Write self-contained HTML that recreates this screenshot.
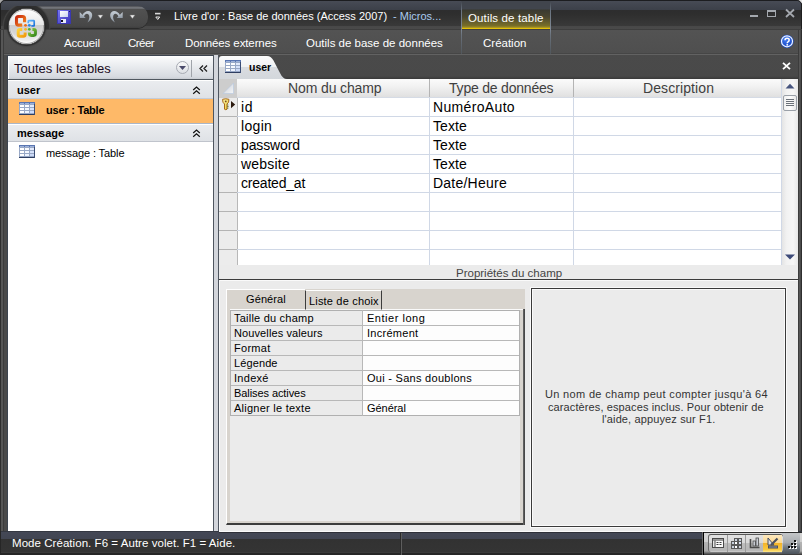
<!DOCTYPE html>
<html><head><meta charset="utf-8">
<style>
*{margin:0;padding:0;box-sizing:border-box}
html,body{width:802px;height:555px;overflow:hidden;background:#3b3b3b}
body{position:relative;font-family:"Liberation Sans",sans-serif;font-size:12px;color:#000}
.a{position:absolute}
.t{position:absolute;white-space:nowrap;line-height:1}
svg{position:absolute;overflow:visible}
</style></head><body>
<!-- ============ TITLE BAR ============ -->
<div class="a" style="left:0;top:0;width:802px;height:30px;background:linear-gradient(#1c1d20 0,#1c1d20 1px,#474b55 1px,#3c4049 10px,#2d2d2e 10px,#2e2e2e 14px,#383838 25px,#3a3a3a 26.5px,#484848 26.5px,#4a4a4a 29px)"></div>
<svg style="left:0;top:0" width="6" height="6"><path d="M0 0 H5 Q1.5 0.8 0 4.5 Z" fill="#a8a8a8"/><path d="M5 0 Q1.5 0.8 0 4.5" fill="none" stroke="#1c1d20" stroke-width="1"/></svg>
<svg style="left:796px;top:0" width="6" height="6"><path d="M6 0 H1 Q4.5 0.8 6 4.5 Z" fill="#e4e4e4"/><path d="M1 0 Q4.5 0.8 6 4.5" fill="none" stroke="#1c1d20" stroke-width="1"/></svg>
<div class="a" style="left:801px;top:4px;width:1px;height:26px;background:#1e1e1e"></div>
<div class="a" style="left:0;top:4px;width:1px;height:26px;background:#1e1e1e"></div>
<!-- QAT bar -->
<div class="a" style="left:30px;top:6px;width:118px;height:22px;border-radius:10px;background:linear-gradient(#3a3b3e 0,#76787e 1px,#6a6c70 2.5px,#515151 3px,#4c4c4c 12px,#474747 20px,#3e3e3e 22px);box-shadow:0 1px 0 #2a2a2a"></div>
<!-- office button -->
<div class="a" style="z-index:4;left:0;top:6px;width:60px;height:23px;overflow:hidden"><div class="a" style="left:2px;top:-4px;width:49px;height:49px;border-radius:50%;background:radial-gradient(circle closest-side,#303030 0,#303030 90%,rgba(70,70,70,0.8) 95%,rgba(70,70,70,0) 100%)"></div></div>
<div class="a" style="z-index:5;left:8px;top:8px;width:37px;height:37px;border-radius:50%;background:#505050;box-shadow:0 0 1.5px 1px #262626"></div>
<div class="a" style="z-index:5;left:9px;top:9px;width:35px;height:35px;border-radius:50%;background:linear-gradient(#ffffff 0,#eeeeee 45%,#cdcdcd 46%,#d8d8d8 70%,#f4f4f4 95%);box-shadow:inset 0 0 0 1px #a8a8a8, inset 0 -2px 2px #fff"></div>
<div class="a" style="z-index:5;left:9px;top:9px;width:35px;height:16px;border-radius:17.5px 17.5px 0 0/16px 16px 0 0;background:linear-gradient(#ffffff,#f0f0f0 60%,#e6e6e6);box-shadow:inset 0 1px 0 #bdbdbd"></div>
<svg style="z-index:5;left:0;top:0" width="60" height="50">
 <defs>
  <linearGradient id="lr" x1="0" y1="0" x2="1" y2="1"><stop offset="0" stop-color="#c82a10"/><stop offset="1" stop-color="#f58a1e"/></linearGradient>
  <linearGradient id="ly" x1="0" y1="0" x2="1" y2="1"><stop offset="0" stop-color="#ffd23a"/><stop offset="1" stop-color="#f29a0a"/></linearGradient>
  <linearGradient id="lg" x1="0" y1="0" x2="1" y2="1"><stop offset="0" stop-color="#8ccc40"/><stop offset="1" stop-color="#3a8a20"/></linearGradient>
  <linearGradient id="lb" x1="0" y1="0" x2="1" y2="1"><stop offset="0" stop-color="#60b8ff"/><stop offset="1" stop-color="#1a70d8"/></linearGradient>
 </defs>
 <path d="M24.6 22.2 V18.6 Q24.6 16.5 22.5 16.5 H18.6 Q16.5 16.5 16.5 18.6 V23 Q16.5 25.1 18.6 25.1 H22.2" fill="none" stroke="url(#lr)" stroke-width="3.1"/>
 <path d="M28.3 23.2 V21.2 Q28.3 20.6 29 20.6 H33.6 Q34.2 20.6 34.2 21.2 V25.2 Q34.2 25.9 33.6 25.9 H31.3" fill="none" stroke="url(#lb)" stroke-width="1.7"/>
 <path d="M22.2 29.4 H20 Q18.2 29.4 18.2 31.2 V34.5 Q18.2 36.3 20 36.3 H23.3 Q25.1 36.3 25.1 34.5 V32.4" fill="none" stroke="url(#ly)" stroke-width="3"/>
 <path d="M32.4 29.4 H33.6 Q35.4 29.4 35.4 31.2 V33.6 Q35.4 35.4 33.6 35.4 H31.2 Q29.4 35.4 29.4 33.6 V32.4" fill="none" stroke="url(#lg)" stroke-width="3"/>
 <circle cx="25.5" cy="25.3" r="1.4" fill="#ee6a18"/>
 <circle cx="29.3" cy="25.3" r="1.4" fill="#2a88e8"/>
 <circle cx="25.5" cy="29.3" r="1.4" fill="#f8b820"/>
 <circle cx="29.3" cy="29.3" r="1.4" fill="#58b030"/>
</svg>
<!-- save icon -->
<svg style="left:57px;top:10px" width="14" height="14" shape-rendering="crispEdges">
 <defs><linearGradient id="sg" x1="0" y1="0" x2="1" y2="1"><stop offset="0" stop-color="#7a78f0"/><stop offset="1" stop-color="#3a36b8"/></linearGradient>
 <linearGradient id="sl" x1="0" y1="0" x2="1" y2="1"><stop offset="0" stop-color="#ffffff"/><stop offset="1" stop-color="#c8d4f0"/></linearGradient></defs>
 <rect x="0" y="0" width="14" height="14" fill="#3a38b0"/>
 <rect x="1" y="0" width="12" height="13" fill="url(#sg)"/>
 <rect x="3" y="1" width="8" height="6" fill="url(#sl)"/>
 <rect x="12" y="1" width="1" height="1" fill="#1a1a60"/>
 <rect x="4" y="9" width="5" height="4" fill="#e8ecf8"/>
 <rect x="4" y="10" width="2" height="2" fill="#101020"/>
</svg>
<!-- undo -->
<svg style="left:76px;top:6px" width="20" height="20">
 <defs><linearGradient id="ug" x1="0" y1="0" x2="0" y2="1"><stop offset="0" stop-color="#c4ccd4"/><stop offset="1" stop-color="#8e98a4"/></linearGradient></defs>
 <path d="M3.7 6 V12 H9.7 Z" fill="url(#ug)"/>
 <path d="M6.2 9.6 C 8 5.5 12.5 3.8 15 6.2 C 17.5 9 16 13.5 11.5 16.5 C 13.5 13 14 10 12.3 8.3 C 10.8 7 8.8 8.2 7.8 10.8 Z" fill="url(#ug)"/>
</svg>
<svg style="left:97px;top:14px" width="7" height="6"><path d="M0.8 1 h5.2 l-2.6 3.6z" fill="#f0f0f0" stroke="#777" stroke-width="0.5"/></svg>
<!-- redo -->
<svg style="left:107px;top:6px" width="20" height="20">
 <path d="M15.7 6 V12 H9.7 Z" fill="url(#ug)"/>
 <path d="M13.2 9.6 C 11.4 5.5 6.9 3.8 4.4 6.2 C 1.9 9 3.4 13.5 7.9 16.5 C 5.9 13 5.4 10 7.1 8.3 C 8.6 7 10.6 8.2 11.6 10.8 Z" fill="url(#ug)"/>
</svg>
<svg style="left:129px;top:14px" width="7" height="6"><path d="M0.8 1 h5.2 l-2.6 3.6z" fill="#f0f0f0" stroke="#777" stroke-width="0.5"/></svg>
<!-- customize -->
<svg style="left:155px;top:12px" width="7" height="9"><path d="M0 1.6 h5.5" stroke="#d8d8d8" stroke-width="1.6"/><path d="M0.8 5 H4.7 L2.75 7.5 Z" stroke="#e8e8e8" stroke-width="1" fill="none" stroke-linejoin="round"/></svg>
<!-- title text -->
<div class="t" style="left:174px;top:11px;font-size:11px;color:#fff">Livre d'or : Base de données (Access 2007)</div>
<div class="t" style="left:393px;top:11px;font-size:11px;color:#a9cbef">- Micros...</div>
<!-- contextual tab header -->
<div class="a" style="left:461px;top:1px;width:90px;height:28px;background:linear-gradient(#41454d 0,#41454d 8px,#3a3a30 9px,#4a4630 16px,#7a7028 25px,#a89420 26.5px,#e8c000 27px,#e0c010 28px)"></div>
<div class="t" style="left:468px;top:13px;font-size:11.5px;letter-spacing:0.14px;color:#fff">Outils de table</div>
<!-- window buttons -->
<div class="a" style="left:750px;top:15px;width:8px;height:2px;background:#a4a8ae"></div>
<div class="a" style="left:767px;top:10px;width:9px;height:7px;border:1px solid #a4a8ae;border-top-width:2px"></div>
<svg style="left:785px;top:9px" width="10" height="9"><path d="M1 0.5 L 9 8 M9 0.5 L 1 8" stroke="#a4a8ae" stroke-width="1.8"/></svg>

<!-- ============ TAB ROW ============ -->
<div class="a" style="left:0;top:29px;width:802px;height:26px;background:linear-gradient(#3e3e3e 0,#3e3e3e 1px,#535353 1px,#4f4f4f 24px,#464646 24px,#464646 25px,#626262 25px)"></div>
<div class="a" style="left:461px;top:1px;width:1px;height:53px;background:linear-gradient(#41454d,#6a7480 10px,#7e8894 28px,#6a727c 34px,#50565c 53px)"></div>
<div class="a" style="left:550px;top:1px;width:1px;height:53px;background:linear-gradient(#41454d,#6a7480 10px,#7e8894 28px,#6a727c 34px,#50565c 53px)"></div>
<div class="t" style="left:64px;top:38px;font-size:11.5px;letter-spacing:-0.19px;color:#fff">Accueil</div>
<div class="t" style="left:128px;top:38px;font-size:11.5px;letter-spacing:-0.55px;color:#fff">Créer</div>
<div class="t" style="left:185px;top:38px;font-size:11.5px;letter-spacing:-0.11px;color:#fff">Données externes</div>
<div class="t" style="left:306px;top:38px;font-size:11.5px;color:#fff">Outils de base de données</div>
<div class="t" style="left:483px;top:38px;font-size:11.5px;color:#fff">Création</div>
<!-- help -->
<svg style="left:779px;top:33px" width="16" height="16">
 <defs><radialGradient id="hg" cx="0.4" cy="0.3" r="0.8"><stop offset="0" stop-color="#4a80f0"/><stop offset="1" stop-color="#0a3cc0"/></radialGradient></defs>
 <circle cx="8" cy="8.3" r="6.6" fill="#1a50d0"/>
 <circle cx="8" cy="8.3" r="5.5" fill="url(#hg)" stroke="#f4f8ff" stroke-width="1.2"/>
 <path d="M6 7.2 Q6 5.3 8.1 5.3 Q10.2 5.3 10.2 7 Q10.2 8.1 9 8.8 Q8.2 9.3 8.2 10.3" fill="none" stroke="#fff" stroke-width="1.5"/>
 <rect x="7.4" y="11.1" width="1.7" height="1.5" fill="#fff"/>
</svg>

<!-- window frame -->
<div class="a" style="left:0;top:30px;width:4px;height:502px;background:linear-gradient(90deg,#2e2e2e 0,#2e2e2e 1px,#565656 1px,#565656 3px,#3c3c3c 3px)"></div>
<div class="a" style="left:798px;top:30px;width:4px;height:502px;background:linear-gradient(90deg,#3c3c3c 0,#3c3c3c 1px,#5a5a5a 1px,#464646 3px,#2e2e2e 3px)"></div>
<!-- main bg -->
<div class="a" style="left:4px;top:55px;width:794px;height:477px;background:#4a4a4a"></div>

<!-- ============ NAV PANE ============ -->
<div class="a" style="left:7px;top:55px;width:207px;height:477px;background:#fff;border-left:1px solid #3d4550;border-top:1px solid #3d4550;border-right:1px solid #4f5660"></div>
<div class="a" style="left:8px;top:56px;width:205px;height:24px;background:linear-gradient(#ffffff 0,#f8f9fa 2px,#d6dae0 21px,#c8ccd2 23px);border-bottom:1px solid #505860;box-shadow:inset 1px 0 0 #fff"></div>
<div class="t" style="left:14px;top:62px;font-size:13px;color:#1a0a20">Toutes les tables</div>
<div class="a" style="left:176px;top:61px;width:13px;height:13px;border-radius:50%;border:1px solid #a7abb3;background:linear-gradient(#fafafa,#dcdfe4)"></div>
<svg style="left:179px;top:66px" width="8" height="5"><path d="M0 0 h7 l-3.5 4z" fill="#4a4a6a"/></svg>
<div class="a" style="left:191px;top:60px;width:1px;height:17px;background:#a0a4aa"></div>
<svg style="left:199px;top:65px" width="9" height="8"><path d="M4 0.5 L 1 3.5 L 4 6.5 M8 0.5 L 5 3.5 L 8 6.5" stroke="#222" stroke-width="1.3" fill="none"/></svg>

<div class="a" style="left:8px;top:80px;width:205px;height:19px;background:linear-gradient(#ffffff 0,#ffffff 1px,#eaecef 1px,#dfe2e6);border-bottom:1px solid #c4ccd8"></div>
<div class="t" style="left:17px;top:85px;font-size:11px;font-weight:bold;color:#000">user</div>
<svg style="left:192px;top:86px" width="9" height="9"><path d="M1.2 4 L4.5 1 L7.8 4 M1.2 7.8 L4.5 4.8 L7.8 7.8" stroke="#111" stroke-width="1.2" fill="none"/></svg>
<div class="a" style="left:8px;top:99px;width:205px;height:24px;background:#feb968"></div>
<div class="t" style="left:46px;top:105px;font-size:11px;letter-spacing:-0.22px;font-weight:bold;color:#000">user : Table</div>
<div class="a" style="left:8px;top:123px;width:205px;height:19px;background:linear-gradient(#aab6c8 0,#aab6c8 1px,#ffffff 1px,#ffffff 2px,#eaecef 2px,#dfe2e6);border-bottom:1px solid #c0c4cc"></div>
<div class="t" style="left:17px;top:128px;font-size:11px;font-weight:bold;color:#000">message</div>
<svg style="left:192px;top:129px" width="9" height="9"><path d="M1.2 4 L4.5 1 L7.8 4 M1.2 7.8 L4.5 4.8 L7.8 7.8" stroke="#111" stroke-width="1.2" fill="none"/></svg>
<div class="t" style="left:46px;top:148px;font-size:11px;letter-spacing:-0.1px;color:#000">message : Table</div>

<!-- table icons -->
<svg style="left:19px;top:102px" width="16" height="13" shape-rendering="crispEdges">
 <rect x="0" y="0" width="16" height="13" fill="#98a8c6"/>
 <rect x="0" y="0" width="16" height="2" fill="#5a76b2"/>
 <rect x="1" y="1" width="4" height="1" fill="#9db2da"/><rect x="6" y="1" width="4" height="1" fill="#9db2da"/><rect x="11" y="1" width="4" height="1" fill="#9db2da"/>
 <rect x="1" y="3" width="4" height="2" fill="#fff"/><rect x="6" y="3" width="4" height="2" fill="#fbfcff"/><rect x="11" y="3" width="4" height="2" fill="#e2eafc"/>
 <rect x="1" y="6" width="4" height="2" fill="#fff"/><rect x="6" y="6" width="4" height="2" fill="#f4f8ff"/><rect x="11" y="6" width="4" height="2" fill="#d6e2fb"/>
 <rect x="1" y="9" width="4" height="2" fill="#fff"/><rect x="6" y="9" width="4" height="2" fill="#eef4ff"/><rect x="11" y="9" width="4" height="2" fill="#ccdaf8"/>
 <rect x="0" y="12" width="16" height="1" fill="#2e3e62"/>
 <rect x="15" y="2" width="1" height="11" fill="#3a4c74"/>
</svg>
<svg style="left:19px;top:145px" width="16" height="13" shape-rendering="crispEdges">
 <rect x="0" y="0" width="16" height="13" fill="#98a8c6"/>
 <rect x="0" y="0" width="16" height="2" fill="#5a76b2"/>
 <rect x="1" y="1" width="4" height="1" fill="#9db2da"/><rect x="6" y="1" width="4" height="1" fill="#9db2da"/><rect x="11" y="1" width="4" height="1" fill="#9db2da"/>
 <rect x="1" y="3" width="4" height="2" fill="#fff"/><rect x="6" y="3" width="4" height="2" fill="#fbfcff"/><rect x="11" y="3" width="4" height="2" fill="#e2eafc"/>
 <rect x="1" y="6" width="4" height="2" fill="#fff"/><rect x="6" y="6" width="4" height="2" fill="#f4f8ff"/><rect x="11" y="6" width="4" height="2" fill="#d6e2fb"/>
 <rect x="1" y="9" width="4" height="2" fill="#fff"/><rect x="6" y="9" width="4" height="2" fill="#eef4ff"/><rect x="11" y="9" width="4" height="2" fill="#ccdaf8"/>
 <rect x="0" y="12" width="16" height="1" fill="#2e3e62"/>
 <rect x="15" y="2" width="1" height="11" fill="#3a4c74"/>
</svg>

<!-- splitter -->
<div class="a" style="left:214px;top:55px;width:4px;height:477px;background:#d3d6dc"></div>
<div class="a" style="left:218px;top:55px;width:1px;height:477px;background:#4f5660"></div>

<!-- ============ DOC AREA ============ -->
<div class="a" style="left:219px;top:55px;width:579px;height:24px;background:linear-gradient(#4a4a4a 0,#494949 21px,#3e3e3e 23px,#3a3a3a 24px)"></div>
<div class="a" style="left:219px;top:79px;width:579px;height:452px;background:#ebebeb"></div>
<!-- doc tab -->
<svg style="left:219px;top:56px" width="72" height="23">
 <defs><linearGradient id="tg" x1="0" y1="0" x2="0" y2="1"><stop offset="0" stop-color="#fbfbfb"/><stop offset="0.47" stop-color="#f1f2f3"/><stop offset="0.5" stop-color="#d9dce0"/><stop offset="1" stop-color="#d3d7dc"/></linearGradient></defs>
 <path d="M0 23 V3 Q0 0 3 0 H48 C51 0 53 2 54.5 4.5 L 61 17 C 63 21 65 23 68 23 Z" fill="url(#tg)"/>
</svg>
<svg style="left:225px;top:60px" width="16" height="13" shape-rendering="crispEdges">
 <rect x="0" y="0" width="16" height="13" fill="#98a8c6"/>
 <rect x="0" y="0" width="16" height="2" fill="#5a76b2"/>
 <rect x="1" y="1" width="4" height="1" fill="#9db2da"/><rect x="6" y="1" width="4" height="1" fill="#9db2da"/><rect x="11" y="1" width="4" height="1" fill="#9db2da"/>
 <rect x="1" y="3" width="4" height="2" fill="#fff"/><rect x="6" y="3" width="4" height="2" fill="#fbfcff"/><rect x="11" y="3" width="4" height="2" fill="#e2eafc"/>
 <rect x="1" y="6" width="4" height="2" fill="#fff"/><rect x="6" y="6" width="4" height="2" fill="#f4f8ff"/><rect x="11" y="6" width="4" height="2" fill="#d6e2fb"/>
 <rect x="1" y="9" width="4" height="2" fill="#fff"/><rect x="6" y="9" width="4" height="2" fill="#eef4ff"/><rect x="11" y="9" width="4" height="2" fill="#ccdaf8"/>
 <rect x="0" y="12" width="16" height="1" fill="#2e3e62"/>
 <rect x="15" y="2" width="1" height="11" fill="#3a4c74"/>
</svg>
<div class="t" style="left:249px;top:62px;font-size:10.5px;font-weight:bold;color:#000">user</div>
<svg style="left:782px;top:62px" width="9" height="8"><path d="M1 0.8 L 8 7.2 M8 0.8 L 1 7.2" stroke="#fff" stroke-width="1.8"/></svg>

<!-- grid -->
<div class="a" style="left:219px;top:79px;width:562px;height:186px;background:#fff"></div>
<!-- header -->
<div class="a" style="left:219px;top:79px;width:562px;height:19px;background:linear-gradient(#fbfbfb,#f2f2f2 40%,#e0e0e0);border-bottom:1px solid #d5dbe5"></div>
<div class="a" style="left:219px;top:79px;width:18px;height:19px;background:#cdcdcd"></div>
<svg style="left:222px;top:82px" width="13" height="13"><defs><linearGradient id="cg" x1="0" y1="0" x2="1" y2="1"><stop offset="0" stop-color="#c8ccd4"/><stop offset="1" stop-color="#f4f6f8"/></linearGradient></defs><path d="M1 11.5 L 11.5 1 V 11.5 Z" fill="url(#cg)" stroke="#b6c8e0" stroke-width="0.6"/></svg>
<div class="a" style="left:429px;top:79px;width:1px;height:18px;background:#b4b4b4"></div>
<div class="a" style="left:573px;top:79px;width:1px;height:18px;background:#b4b4b4"></div>
<div class="t" style="left:288px;top:81px;font-size:14px;letter-spacing:-0.12px;color:#404040">Nom du champ</div>
<div class="t" style="left:449px;top:81px;font-size:14px;letter-spacing:-0.2px;color:#404040">Type de données</div>
<div class="t" style="left:643px;top:81px;font-size:14px;letter-spacing:0.09px;color:#404040">Description</div>
<!-- row selector column -->
<div class="a" style="left:219px;top:98px;width:19px;height:167px;background:#ececec;border-right:1px solid #b8b8b8"></div>
<!-- row lines -->
<div class="a" id="rows" style="left:219px;top:98px;width:562px;height:167px;background:repeating-linear-gradient(180deg,transparent 0,transparent 18px,#d0d8e6 18px,#d0d8e6 19px)"></div>
<div class="a" style="left:219px;top:98px;width:18px;height:167px;background:repeating-linear-gradient(180deg,transparent 0,transparent 18px,#b4b4b4 18px,#b4b4b4 19px)"></div>
<div class="a" style="left:429px;top:98px;width:1px;height:167px;background:#d0d8e6"></div>
<div class="a" style="left:573px;top:98px;width:1px;height:167px;background:#d0d8e6"></div>
<div class="a" style="left:781px;top:79px;width:1px;height:186px;background:#d0d8e6"></div>
<!-- key + arrow -->
<svg style="left:221px;top:98px" width="10" height="13">
 <defs><linearGradient id="kg" x1="0" y1="0" x2="1" y2="1"><stop offset="0" stop-color="#fbf7b0"/><stop offset="1" stop-color="#e8c830"/></linearGradient></defs>
 <path d="M1.6 1.3 Q1.3 4.8 3.5 6 V11.2 Q4.8 12.2 6 11.2 V6 Q8.2 4.8 7.9 1.3 Q4.75 0.2 1.6 1.3 Z" fill="url(#kg)" stroke="#a86818" stroke-width="1"/>
 <circle cx="4.75" cy="3.4" r="0.9" fill="#7a4a20"/>
 <path d="M6.3 7 h1 M6.3 8.6 h1.2 M6.3 10.2 h1" stroke="#4a5a10" stroke-width="0.9"/>
</svg>
<svg style="left:231px;top:101px" width="5" height="8"><path d="M0 0 L 4.2 3.6 L 0 7.2 Z" fill="#2b1a0e"/></svg>
<!-- data -->
<div class="t" style="left:241px;top:100px;font-size:14px;letter-spacing:0.6px">id</div>
<div class="t" style="left:241px;top:119px;font-size:14px;letter-spacing:0.33px">login</div>
<div class="t" style="left:241px;top:138px;font-size:14px;letter-spacing:-0.14px">password</div>
<div class="t" style="left:241px;top:157px;font-size:14px;letter-spacing:0.2px">website</div>
<div class="t" style="left:241px;top:176px;font-size:14px;letter-spacing:-0.21px">created_at</div>
<div class="t" style="left:433px;top:100px;font-size:14px;letter-spacing:0.34px">NuméroAuto</div>
<div class="t" style="left:433px;top:119px;font-size:14px;letter-spacing:0.05px">Texte</div>
<div class="t" style="left:433px;top:138px;font-size:14px;letter-spacing:0.05px">Texte</div>
<div class="t" style="left:433px;top:157px;font-size:14px;letter-spacing:0.05px">Texte</div>
<div class="t" style="left:433px;top:176px;font-size:14px;letter-spacing:0.23px">Date/Heure</div>
<!-- scrollbar -->
<div class="a" style="left:782px;top:79px;width:16px;height:186px;background:linear-gradient(90deg,#e4e4e4,#f2f2f2 30%,#f6f6f6 70%,#e8e8e8)"></div>
<svg style="left:785px;top:83px" width="10" height="6"><path d="M0.5 5.5 L 5 0.8 L 9.5 5.5 Z" fill="#46547e"/></svg>
<div class="a" style="left:783px;top:95px;width:14px;height:16px;border:1px solid #9aa0a8;border-radius:2px;background:linear-gradient(90deg,#f0f0f0,#fdfdfd 50%,#e8e8e8)"></div>
<svg style="left:786px;top:99px" width="8" height="9"><path d="M0 0.5 h8 M0 2.5 h8 M0 4.5 h8 M0 6.5 h8" stroke="#6a7078" stroke-width="1"/></svg>
<svg style="left:785px;top:254px" width="10" height="6"><path d="M0 0.5 L 5 5.5 L 10 0.5 Z" fill="#3d4a78"/></svg>
<!-- proprietes strip -->
<div class="t" style="left:456px;top:267.5px;font-size:11.5px;color:#444">Propriétés du champ</div>
<div class="a" style="left:219px;top:279px;width:579px;height:1px;background:#3c3c3c"></div>
<div class="a" style="left:219px;top:280px;width:579px;height:1px;background:#fafafa"></div>
<div class="a" style="left:219px;top:280px;width:1px;height:251px;background:#fafafa"></div>

<!-- property sheet -->
<div class="a" style="left:226px;top:289px;width:299px;height:236px;background:#d8d4ce;border-left:1px solid #fff;border-bottom:2px solid #3c3c3c"></div>
<div class="a" style="left:226px;top:289px;width:79px;height:1px;background:#fff"></div>
<div class="a" style="left:523px;top:309px;width:2px;height:216px;background:linear-gradient(90deg,#6a6a6a,#3c3c3c)"></div>
<div class="a" style="left:230px;top:309px;width:293px;height:1px;background:#fafafa"></div>
<div class="a" style="left:230px;top:310px;width:290px;height:211px;background:#ebebeb"></div>
<div class="t" style="left:246px;top:294px;font-size:11px;letter-spacing:0.11px;color:#000">Général</div>
<div class="a" style="left:305px;top:290px;width:77px;height:20px;background:#d8d4ce;border-left:1px solid #3c3c3c;border-top:1px solid #fff;border-right:1px solid #3c3c3c;border-bottom:1px solid #f4f4f4"></div>
<div class="t" style="left:309px;top:296px;font-size:11px;letter-spacing:0.18px;color:#000">Liste de choix</div>
<!-- prop grid -->
<div class="a" style="left:230px;top:310px;width:290px;height:106px;background:#fdfdfd;border:1px solid #b0b0b0"></div>
<div class="a" style="left:231px;top:311px;width:131px;height:104px;background:#ebebeb"></div>
<div class="a" style="left:231px;top:311px;width:288px;height:104px;background:repeating-linear-gradient(180deg,transparent 0,transparent 14px,#b8b8b8 14px,#b8b8b8 15px)"></div>
<div class="a" style="left:362px;top:310px;width:1px;height:106px;background:#b8b8b8"></div>
<div class="t" style="left:234px;top:312.5px;font-size:11px;letter-spacing:0.22px">Taille du champ</div>
<div class="t" style="left:234px;top:327.5px;font-size:11px;letter-spacing:0.11px">Nouvelles valeurs</div>
<div class="t" style="left:234px;top:342.5px;font-size:11px;letter-spacing:0.27px">Format</div>
<div class="t" style="left:234px;top:357.5px;font-size:11px;letter-spacing:0.11px">Légende</div>
<div class="t" style="left:234px;top:372.5px;font-size:11px;letter-spacing:0.29px">Indexé</div>
<div class="t" style="left:234px;top:387.5px;font-size:11px;letter-spacing:-0.08px">Balises actives</div>
<div class="t" style="left:234px;top:402.5px;font-size:11px;letter-spacing:0.25px">Aligner le texte</div>
<div class="t" style="left:367px;top:312.5px;font-size:11px;letter-spacing:0.52px">Entier long</div>
<div class="t" style="left:367px;top:327.5px;font-size:11px;letter-spacing:0.28px">Incrément</div>
<div class="t" style="left:367px;top:372.5px;font-size:11px;letter-spacing:0.28px">Oui - Sans doublons</div>
<div class="t" style="left:367px;top:402.5px;font-size:11px;letter-spacing:-0.05px">Général</div>

<!-- help panel -->
<div class="a" style="left:530px;top:287px;width:257px;height:241px;border:1px solid #fafafa"></div>
<div class="a" style="left:531px;top:288px;width:255px;height:239px;border:1px solid #3a3a3a"></div>
<div class="a" style="left:532px;top:289px;width:253px;height:237px;border:1px solid #fafafa"></div>
<div class="t" style="left:545px;top:389px;font-size:11px;letter-spacing:0.33px;color:#333">Un nom de champ peut compter jusqu'à 64</div>
<div class="t" style="left:548px;top:401.5px;font-size:11px;letter-spacing:0.11px;color:#333">caractères, espaces inclus. Pour obtenir de</div>
<div class="t" style="left:602px;top:414px;font-size:11px;letter-spacing:0.13px;color:#333">l'aide, appuyez sur F1.</div>

<!-- ============ STATUS BAR ============ -->
<div class="a" style="left:0;top:531px;width:802px;height:24px;background:linear-gradient(#343842 0,#343842 1px,#444856 1px,#414552 8.5px,#323232 8.5px,#343434 21px,#3a3a3a 21px,#3a3a3a 22px,#262626 22px)"></div>
<div class="a" style="left:219px;top:531px;width:579px;height:1px;background:#fafafa"></div>
<div class="a" style="left:219px;top:532px;width:579px;height:1px;background:#2e3038"></div>
<div class="a" style="left:0;top:531px;width:1px;height:22px;background:#262626"></div>
<div class="t" style="left:12px;top:538px;font-size:11.5px;letter-spacing:0.05px;color:#fff">Mode Création. F6 = Autre volet. F1 = Aide.</div>
<div class="a" style="left:400px;top:533px;width:2px;height:22px;background:linear-gradient(90deg,#111,#777)"></div>
<!-- status right panel -->
<div class="a" style="left:702px;top:532px;width:1px;height:23px;background:#6a6a6a"></div>
<div class="a" style="left:703px;top:532px;width:1px;height:23px;background:#000"></div>
<div class="a" style="left:704px;top:532px;width:98px;height:23px;background:linear-gradient(#2a2a2a 0,#2a2a2a 1px,#d6d6d6 1px,#cfcfcf 10px,#b4b4b4 10px,#a8a8a8 19px,#6a6a6a 21px,#2e2e2e 23px)"></div>
<div class="a" style="left:782px;top:533px;width:18px;height:21px;background:linear-gradient(#c4c6c8,#a8acb0 45%,#707880 70%,#4a525a);border-bottom-right-radius:4px"></div>
<div class="a" style="left:708px;top:534px;width:75px;height:18px;border-radius:3px;border-top:1px solid #555;border-left:1px solid #666;background:linear-gradient(#e2e2e2,#d8d8d8 45%,#bdbdbd 50%,#b6b6b6 90%,#cfcfcf)"></div>
<div class="a" style="left:727px;top:535px;width:1px;height:17px;background:#9a9a9a"></div>
<div class="a" style="left:745px;top:535px;width:1px;height:17px;background:#9a9a9a"></div>
<div class="a" style="left:763px;top:535px;width:19px;height:17px;background:linear-gradient(#fde9c0,#fbd890 45%,#f5b52a 50%,#f8c840 85%,#fde890)"></div>
<svg style="left:712px;top:538px" width="12" height="10">
 <rect x="0.5" y="0.5" width="11" height="9" fill="#e8e8e8" stroke="#4a4a4a"/>
 <rect x="3" y="3" width="8" height="6" fill="#fafafa"/>
 <path d="M1 2 h10" stroke="#4a4a4a"/><path d="M3 2.5 v7" stroke="#4a4a4a"/>
 <path d="M4.5 4.5 h2 M7.5 4.5 h2 M4.5 6.5 h2 M7.5 6.5 h2" stroke="#3a3a3a" stroke-width="1.2"/>
</svg>
<svg style="left:731px;top:538px" width="12" height="11">
 <rect x="3" y="0" width="8" height="11" fill="#5a5a5a"/><rect x="0" y="3" width="3" height="8" fill="#5a5a5a"/>
 <rect x="4" y="1" width="2" height="2" fill="#c8d0dc"/><rect x="8" y="1" width="2" height="2" fill="#c8d0dc"/>
 <rect x="1" y="4" width="2" height="2" fill="#c8d0dc"/><rect x="4" y="4" width="2" height="2" fill="#fff"/><rect x="8" y="4" width="2" height="2" fill="#d8e0f0"/>
 <rect x="1" y="8" width="2" height="2" fill="#c8d0dc"/><rect x="4" y="8" width="2" height="2" fill="#fff"/><rect x="8" y="8" width="2" height="2" fill="#c8d0dc"/>
</svg>
<svg style="left:749px;top:537px" width="12" height="12">
 <path d="M1.5 2 V10.5 H10.5" stroke="#4a4a4a" stroke-width="1.6" fill="none"/>
 <rect x="4" y="4" width="2.5" height="5" fill="#c8ccd4" stroke="#4a4a4a" stroke-width="0.8"/>
 <rect x="7" y="1" width="2.5" height="8" fill="#c8ccd4" stroke="#4a4a4a" stroke-width="0.8"/>
</svg>
<svg style="left:767px;top:537px" width="12" height="12">
 <path d="M1 1 V8 H7 Z" fill="#d8dce4" stroke="#4a5060" stroke-width="1"/>
 <path d="M4 8 L10.5 1.5" stroke="#4a5060" stroke-width="2.2"/>
 <rect x="1" y="8.5" width="10" height="3" fill="#4a5060"/>
 <path d="M2.5 10 h1 M4.5 10 h1 M6.5 10 h1 M8.5 10 h1" stroke="#c8d0e0" stroke-width="1"/>
</svg>
<svg style="left:786px;top:539px" width="12" height="12">
 <g fill="#fafafa"><rect x="9" y="2" width="2" height="2"/><rect x="6" y="5" width="2" height="2"/><rect x="9" y="5" width="2" height="2"/><rect x="3" y="8" width="2" height="2"/><rect x="6" y="8" width="2" height="2"/><rect x="9" y="8" width="2" height="2"/></g>
 <g fill="#111"><rect x="8" y="1" width="2" height="2"/><rect x="5" y="4" width="2" height="2"/><rect x="8" y="4" width="2" height="2"/><rect x="2" y="7" width="2" height="2"/><rect x="5" y="7" width="2" height="2"/><rect x="8" y="7" width="2" height="2"/></g>
</svg>
</body></html>
